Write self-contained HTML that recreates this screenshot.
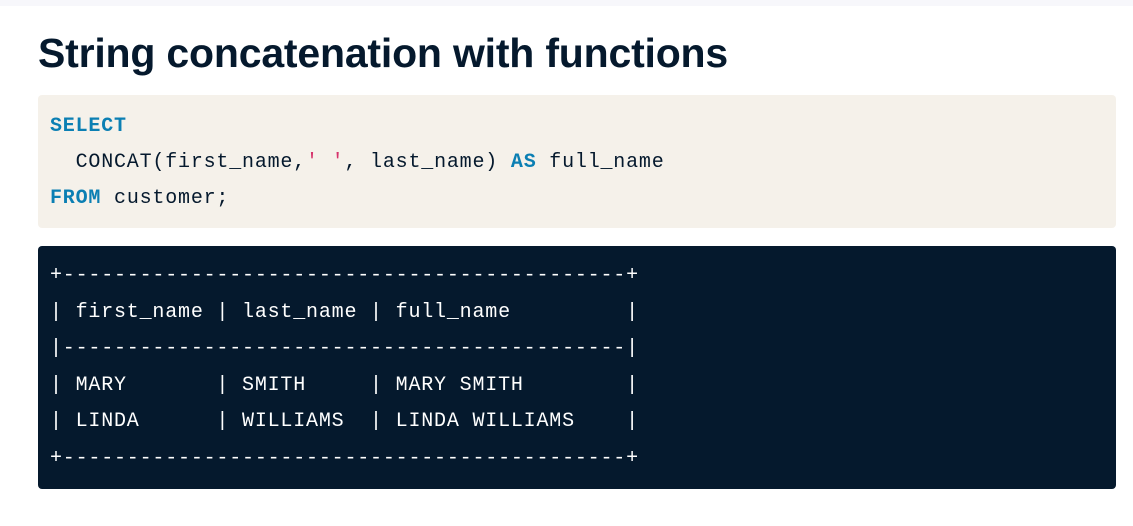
<!DOCTYPE html>
<html><head><style>
html,body{margin:0;padding:0;background:#fff;width:1133px;height:526px;overflow:hidden}
.top{height:6px;background:#f7f7fb}
h1{position:absolute;left:38px;top:29px;margin:0;font:bold 41px/1.2 "Liberation Sans",sans-serif;color:#05192d;letter-spacing:-0.2px}
.code{position:absolute;left:38px;top:95px;width:1078px;height:133px;background:#f5f1ea;border-radius:4px}
.dark{position:absolute;left:38px;top:246px;width:1078px;height:243px;background:#05192d;border-radius:4px}
pre{margin:0;font:20px "Liberation Mono",monospace;letter-spacing:0.8px;white-space:pre}
.code pre{position:absolute;left:12px;top:14px;line-height:36px;color:#05192d}
.dark pre{position:absolute;left:12px;top:12px;line-height:36.6px;color:#fff}
.k{color:#0b7fb3;font-weight:bold}
.s{color:#d6336c}
</style></head><body>
<div class="top"></div>
<h1>String concatenation with functions</h1>
<div class="code"><pre><span class="k">SELECT</span>
  CONCAT(first_name,<span class="s">' '</span>, last_name) <span class="k">AS</span> full_name
<span class="k">FROM</span> customer;</pre></div>
<div class="dark"><pre>+--------------------------------------------+
| first_name | last_name | full_name         |
|--------------------------------------------|
| MARY       | SMITH     | MARY SMITH        |
| LINDA      | WILLIAMS  | LINDA WILLIAMS    |
+--------------------------------------------+</pre></div>
</body></html>
